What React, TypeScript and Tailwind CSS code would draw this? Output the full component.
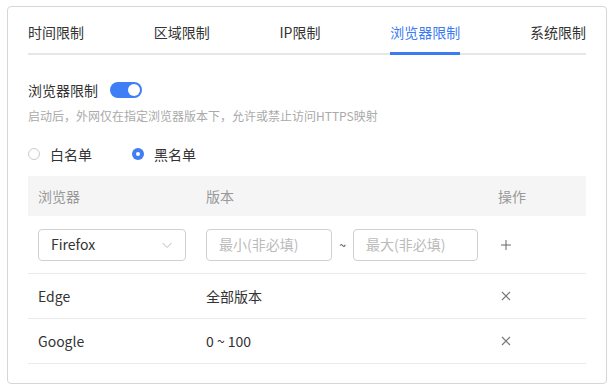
import React from "react";

const font = { fontFamily: '"Noto Sans CJK SC", "Noto Sans", sans-serif' };

export default function App() {
  const tabs = ["时间限制", "区域限制", "IP限制", "浏览器限制", "系统限制"];
  return (
    <div className="w-[616px] h-[392px] bg-white pt-[6px] pl-[7px]" style={font}>
      <div className="w-[600px] h-[378px] border border-[#d6d6d6] rounded-[4px] px-5">
        {/* Tabs */}
        <div className="flex justify-between border-b-2 border-[#e6e6e6] h-[48px] items-end">
          {tabs.map((t, i) => (
            <div
              key={t}
              className={
                "text-[14px] leading-[20px] pb-[10px] -mb-[2px] border-b-[3px] " +
                (i === 3 ? "text-[#3b7cf5] border-[#3b7cf5]" : "text-[#333] border-transparent")
              }
            >
              {t}
            </div>
          ))}
        </div>

        {/* Switch */}
        <div className="flex items-center mt-[26px] h-[18px]">
          <span className="text-[14px] text-[#333] leading-[18px]">浏览器限制</span>
          <div className="ml-[12px] w-[32px] h-[16px] rounded-full bg-[#3f7ef5] relative">
            <div className="absolute right-[2px] top-[2px] w-[12px] h-[12px] rounded-full bg-white" />
          </div>
        </div>
        <div className="mt-[8px] text-[12px] text-[#aaa] leading-[18px]">
          启动后，外网仅在指定浏览器版本下，允许或禁止访问HTTPS映射
        </div>

        {/* Radios */}
        <div className="flex items-center mt-[19px] h-[20px] text-[14px] text-[#333]">
          <div className="flex items-center">
            <div className="w-[12px] h-[12px] rounded-full border border-[#ccc] bg-white" />
            <span className="ml-[10px]">白名单</span>
          </div>
          <div className="flex items-center ml-[40px]">
            <div className="w-[12px] h-[12px] rounded-full bg-[#3f7ef5] flex items-center justify-center">
              <div className="w-[4px] h-[4px] rounded-full bg-white" />
            </div>
            <span className="ml-[10px]">黑名单</span>
          </div>
        </div>

        {/* Table */}
        <div className="mt-[12px] text-[14px]">
          <div className="flex items-center h-[40px] bg-[#f5f5f5] text-[#999]">
            <div className="w-[168px] pl-[10px]">浏览器</div>
            <div className="w-[292px] pl-[10px]">版本</div>
            <div className="flex-1 pl-[10px]">操作</div>
          </div>
          <div className="flex items-center h-[58px] border-b border-[#ebebeb]">
            <div className="w-[168px] pl-[10px]">
              <div className="w-[148px] h-[32px] border border-[#d0d0d0] rounded-[4px] flex items-center justify-between pl-[12px] pr-[12px]">
                <span className="text-[#333]">Firefox</span>
                <svg width="12" height="12" viewBox="0 0 12 12" fill="none">
                  <path d="M1.5 4l4.5 4.5L10.5 4" stroke="#bbb" strokeWidth="1" />
                </svg>
              </div>
            </div>
            <div className="w-[292px] pl-[10px] flex items-center">
              <div className="w-[126px] h-[32px] border border-[#d0d0d0] rounded-[4px] flex items-center pl-[12px] text-[#bbb]">
                最小(非必填)
              </div>
              <span className="w-[21px] text-center text-[#333] text-[12px]">~</span>
              <div className="w-[125px] h-[32px] border border-[#d0d0d0] rounded-[4px] flex items-center pl-[12px] text-[#bbb]">
                最大(非必填)
              </div>
            </div>
            <div className="flex-1 pl-[10px]">
              <svg width="14" height="14" viewBox="0 0 14 14" className="ml-[1px]">
                <path d="M7 2v10M2 7h10" stroke="#666" strokeWidth="1" />
              </svg>
            </div>
          </div>
          {[
            ["Edge", "全部版本"],
            ["Google", "0 ~ 100"],
          ].map(([b, v]) => (
            <div key={b} className="flex items-center h-[45px] border-b border-[#ebebeb] text-[#333]">
              <div className="w-[168px] pl-[10px]">{b}</div>
              <div className="w-[292px] pl-[10px]">{v}</div>
              <div className="flex-1 pl-[10px]">
                <svg width="14" height="14" viewBox="0 0 14 14" className="ml-[1px]">
                  <path d="M3 3l8 8M11 3l-8 8" stroke="#777" strokeWidth="1.1" />
                </svg>
              </div>
            </div>
          ))}
        </div>
      </div>
    </div>
  );
}
